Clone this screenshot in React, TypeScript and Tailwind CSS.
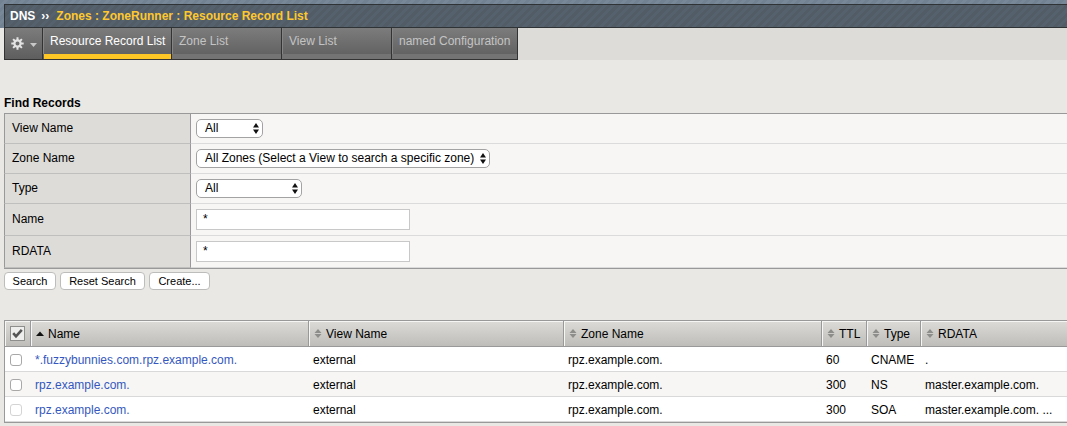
import { useState, type ReactNode } from 'react';

function SelectBox({ id, value, width }: { id: string; value: string; width: string }) {
  return (
    <span className={`relative flex h-[19px] ${width}`}>
      <select
        id={id}
        className="h-[19px] w-full appearance-none rounded-[5px] border border-[#a3a3a3] bg-white pb-px pl-2 text-[12px] leading-[16px] text-black"
      >
        <option>{value}</option>
      </select>
      <svg className="pointer-events-none absolute right-1 top-1 h-[11px] w-[6px]" viewBox="0 0 6 11" aria-hidden="true">
        <path d="M3 0L6 4.5H0ZM0 6.5H6L3 11Z" fill="#111" />
      </svg>
    </span>
  );
}

function Field({ id, label, tall, children }: { id: string; label: string; tall?: boolean; children: ReactNode }) {
  return (
    <div className={`flex ${tall ? 'h-8' : 'h-[30px]'}`}>
      <label
        htmlFor={id}
        className={`w-[187px] shrink-0 border-x border-b border-x-[#999] border-b-[#bfbfbd] bg-[#dedcd8] pl-[7px] ${tall ? 'pt-2' : 'pt-[7px]'}`}
      >
        {label}
      </label>
      <div className="flex grow items-start border-b border-[#dbdbdb] bg-[#f7f6f5] pl-[5px] pt-[5px]">{children}</div>
    </div>
  );
}

function TextBox({ id }: { id: string }) {
  return (
    <input
      id={id}
      type="text"
      defaultValue="*"
      className="h-[21px] w-[214px] border border-[#c8c8c8] bg-white pb-[2px] pl-[6px] text-[12px] leading-[14px] text-black"
    />
  );
}

function GearIcon() {
  return (
    <svg className="h-[13px] w-[13px]" viewBox="0 0 13 13" aria-hidden="true">
      <g stroke="#e3e3e3" strokeWidth="2">
        <path d="M6.5 0.3V3M6.5 10V12.7M0.3 6.5H3M10 6.5H12.7M2.1 2.1L4 4M9 9L10.9 10.9M10.9 2.1L9 4M4 9L2.1 10.9" />
      </g>
      <circle cx="6.5" cy="6.5" r="3.1" fill="none" stroke="#e3e3e3" strokeWidth="2.2" />
    </svg>
  );
}

function SortIcon({ active }: { active?: boolean }) {
  return active ? (
    <svg className="h-2 w-2 shrink-0" viewBox="0 0 8 8" aria-hidden="true">
      <path d="M0 6H8L4 1.5Z" fill="#111" />
    </svg>
  ) : (
    <svg className="h-[9px] w-2 shrink-0" viewBox="0 0 8 9" aria-hidden="true">
      <path d="M0.5 4H7.5L4 0ZM0.5 5H7.5L4 9Z" fill="#8d8d8b" />
    </svg>
  );
}

function RowCheck({ label, checked, disabled, onChange }: { label: string; checked?: boolean; disabled?: boolean; onChange?: () => void }) {
  return (
    <input
      type="checkbox"
      aria-label={label}
      checked={checked}
      disabled={disabled}
      onChange={onChange}
      className="block h-3 w-3 appearance-none rounded-[3px] border border-[#a8a8a8] bg-white checked:bg-[#4a7ad0] disabled:border-[#d4d4d4]"
    />
  );
}

const tabs = [
  { label: 'Resource Record List', width: 'w-[129px]', active: true },
  { label: 'Zone List', width: 'w-[110px]' },
  { label: 'View List', width: 'w-[110px]' },
  { label: 'named Configuration', width: 'w-[126px]' },
];

const columns = ['Name', 'View Name', 'Zone Name', 'TTL', 'Type', 'RDATA'];

const records = [
  ['*.fuzzybunnies.com.rpz.example.com.', 'external', 'rpz.example.com.', '60', 'CNAME', '.'],
  ['rpz.example.com.', 'external', 'rpz.example.com.', '300', 'NS', 'master.example.com.'],
  ['rpz.example.com.', 'external', 'rpz.example.com.', '300', 'SOA', 'master.example.com. ...'],
];

const buttons = [
  { label: 'Search', width: 'w-[52px]' },
  { label: 'Reset Search', width: 'w-[85px]' },
  { label: 'Create...', width: 'w-[61px]' },
];

export default function App() {
  const [selected, setSelected] = useState([false, false, false]);
  const toggle = (row: number) => setSelected(selected.map((on, i) => (i === row ? !on : on)));

  return (
    <div className="min-h-screen overflow-x-hidden bg-[#e9e8e4] font-['Liberation_Sans',Arial,sans-serif] text-[12px] leading-[14px] text-black">
      <header>
        <div className="bg-[#748494] bg-[repeating-linear-gradient(135deg,#728292_0px,#728292_3px,#788898_3px,#788898_6px)] pl-1 pt-1">
          <div className="flex h-6 items-center border-y border-l border-[#303335] bg-[#525d68] bg-[repeating-linear-gradient(135deg,#515c67_0px,#515c67_3px,#55616d_3px,#55616d_6px)] pl-[5px] font-bold text-white">
            <span>DNS</span>
            <span className="pl-[6px]">››</span>
            <span className="pl-[7px] text-[#ffc82e]">Zones : ZoneRunner : Resource Record List</span>
          </div>
        </div>
        <nav className="ml-1 flex h-8 bg-[#dedcd8]">
          <button
            type="button"
            aria-label="Options"
            className="flex w-[39px] items-center gap-[6px] border-x border-b border-[#333] bg-linear-to-b from-[#7c7c7c] to-[#5e5e5e] pl-[6px]"
          >
            <GearIcon />
            <svg className="mt-[2px] h-1 w-[7px]" viewBox="0 0 7 4" aria-hidden="true">
              <path d="M0 0H7L3.5 4Z" fill="#c8c8c8" />
            </svg>
          </button>
          {tabs.map((tab) => (
            <a
              key={tab.label}
              href="#"
              className={`${tab.width} flex flex-col justify-between border-b border-r border-[#333] bg-linear-to-b from-[#7c7c7c] to-[#5e5e5e] ${
                tab.active ? 'text-white' : 'text-[#c4c4c4]'
              }`}
            >
              <span className="whitespace-nowrap border-l border-[#858585] pl-[6px] pt-[6px] pb-[6px]">{tab.label}</span>
              <span className={`h-[5px] ${tab.active ? 'ml-px bg-[#ffc726]' : 'bg-[#747474]'}`} />
            </a>
          ))}
        </nav>
      </header>

      <main className="pl-1 pt-9">
        <form onSubmit={(event) => event.preventDefault()}>
          <h2 className="pb-[3px] font-bold">Find Records</h2>
          <div className="border-y border-[#999]">
            <Field id="view" label="View Name">
              <SelectBox id="view" value="All" width="w-[67px]" />
            </Field>
            <Field id="zone" label="Zone Name">
              <SelectBox id="zone" value="All Zones (Select a View to search a specific zone)" width="w-[294px]" />
            </Field>
            <Field id="type" label="Type">
              <SelectBox id="type" value="All" width="w-[106px]" />
            </Field>
            <Field id="name" label="Name" tall>
              <TextBox id="name" />
            </Field>
            <Field id="rdata" label="RDATA" tall>
              <TextBox id="rdata" />
            </Field>
          </div>
          <div className="flex gap-1 pt-[3px]">
            {buttons.map((button) => (
              <button
                key={button.label}
                type="button"
                className={`${button.width} h-[18px] whitespace-nowrap rounded-[4px] border border-[#bdbdbb] bg-white text-[11px] leading-[16px]`}
              >
                {button.label}
              </button>
            ))}
          </div>
        </form>

        <table className="mt-[30px] w-full table-fixed border-separate border-spacing-0 border-y border-l border-[#999] text-left">
          <colgroup>
            <col className="w-[26px]" />
            <col className="w-[278px]" />
            <col className="w-[255px]" />
            <col className="w-[258px]" />
            <col className="w-[45px]" />
            <col className="w-[54px]" />
            <col />
          </colgroup>
          <thead>
            <tr className="h-[26px]">
              <th className="border-b border-r border-[#999] bg-linear-to-b from-[#dcdbd7] to-[#bebdb9] p-0 shadow-[inset_1px_1px_0_#f6f6f4]">
                <input
                  type="checkbox"
                  aria-label="Select all"
                  className="peer sr-only"
                  onChange={(event) => setSelected([event.target.checked, event.target.checked, false])}
                  id="all"
                />
                <label htmlFor="all" className="ml-[5px] flex h-[15px] w-[15px] items-center justify-center border border-[#8e8e8c] bg-[#eeeeec]">
                  <svg className="h-[11px] w-[11px]" viewBox="0 0 11 11" aria-hidden="true">
                    <path d="M1.2 5.2L4 8.4L9.8 1.8" fill="none" stroke="#555" strokeWidth="2.6" />
                  </svg>
                </label>
              </th>
              {columns.map((column, i) => (
                <th
                  key={column}
                  className={`border-b border-[#999] bg-linear-to-b from-[#dcdbd7] to-[#bebdb9] p-0 font-normal shadow-[inset_1px_1px_0_#f6f6f4] ${
                    i < columns.length - 1 ? 'border-r' : ''
                  }`}
                >
                  <span className="flex items-center gap-1 whitespace-nowrap pl-[5px]">
                    <SortIcon active={i === 0} />
                    {column}
                  </span>
                </th>
              ))}
            </tr>
          </thead>
          <tbody>
            {records.map((record, row) => (
              <tr key={row} className={`h-[25px] ${row === 1 ? 'bg-[#f7f6f5]' : 'bg-white'}`}>
                <td className="border-b border-[#d9d9d9] p-0 pl-[5px] pt-[2px]">
                  <RowCheck label={`Select record ${row + 1}`} checked={selected[row]} disabled={row === 2} onChange={() => toggle(row)} />
                </td>
                {record.map((cell, i) => (
                  <td key={i} className="whitespace-nowrap border-b border-[#d9d9d9] p-0 pl-1 pt-[2px]">
                    {i === 0 ? (
                      <a href="#" className="text-[#3558be]">
                        {cell}
                      </a>
                    ) : (
                      cell
                    )}
                  </td>
                ))}
              </tr>
            ))}
          </tbody>
        </table>
      </main>
    </div>
  );
}
